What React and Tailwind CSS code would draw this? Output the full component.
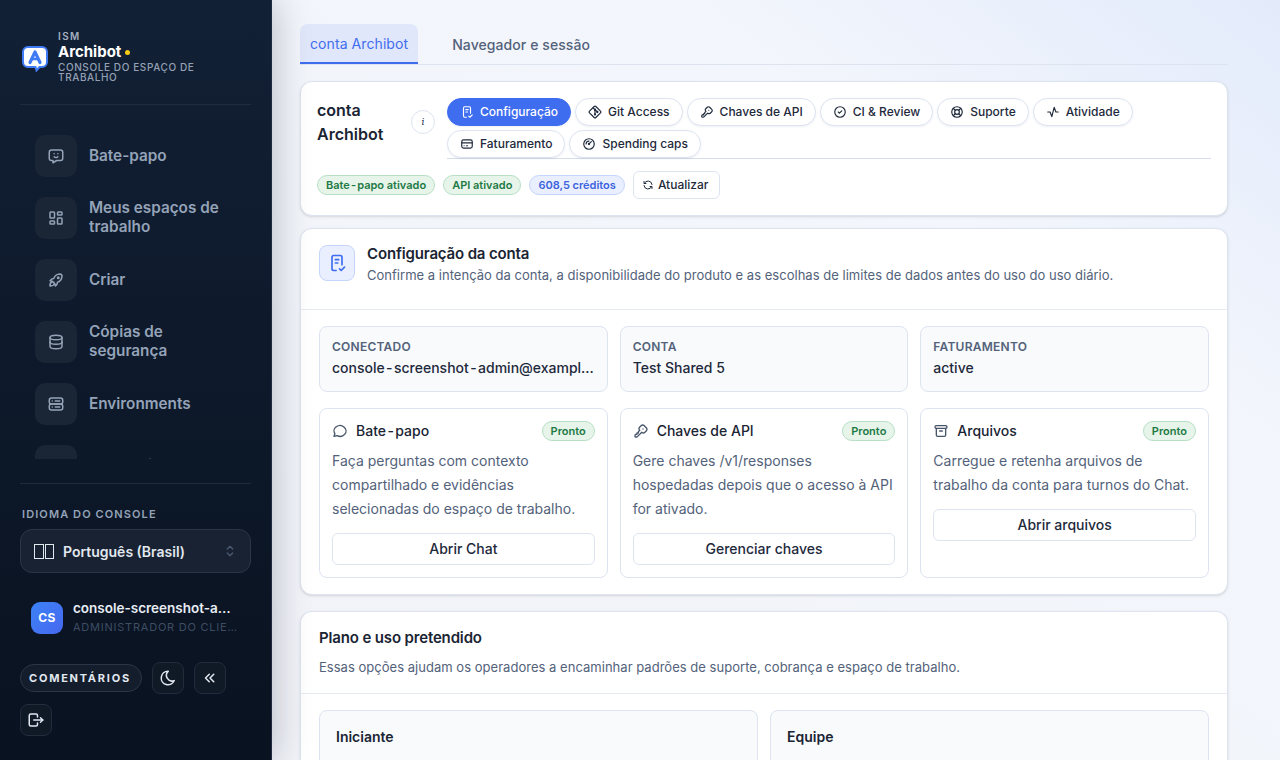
import React from 'react'
import {
  TbMessageChatbot, TbLayoutDashboard, TbRocket, TbDatabase, TbServer2, TbFolder, TbBrandGit, TbSelector, TbMoon,
  TbChevronsLeft, TbLogout, TbKey, TbCircleCheck, TbLifebuoy, TbActivity, TbCreditCard,
  TbGauge, TbRefresh, TbMessageCircle, TbArchive,
} from 'react-icons/tb'

const NAV_ITEMS = [
  { label: 'Bate-papo', icon: TbMessageChatbot },
  { label: 'Meus espaços de trabalho', icon: TbLayoutDashboard },
  { label: 'Criar', icon: TbRocket },
  { label: 'Cópias de segurança', icon: TbDatabase },
  { label: 'Environments', icon: TbServer2 },
  { label: 'Repositórios', icon: TbFolder },
]

const SECTION_TABS = [
  { label: 'Configuração', icon: SetupIcon, active: true },
  { label: 'Git Access', icon: TbBrandGit },
  { label: 'Chaves de API', icon: TbKey },
  { label: 'CI & Review', icon: TbCircleCheck },
  { label: 'Suporte', icon: TbLifebuoy },
  { label: 'Atividade', icon: TbActivity },
  { label: 'Faturamento', icon: TbCreditCard },
  { label: 'Spending caps', icon: TbGauge },
]

const STATS = [
  { label: 'CONECTADO', value: 'console-screenshot-admin@example.com' },
  { label: 'CONTA', value: 'Test Shared 5' },
  { label: 'FATURAMENTO', value: 'active' },
]

const PRODUCTS = [
  {
    title: 'Bate-papo',
    icon: TbMessageCircle,
    text: 'Faça perguntas com contexto compartilhado e evidências selecionadas do espaço de trabalho.',
    action: 'Abrir Chat',
  },
  {
    title: 'Chaves de API',
    icon: TbKey,
    text: 'Gere chaves /v1/responses hospedadas depois que o acesso à API for ativado.',
    action: 'Gerenciar chaves',
  },
  {
    title: 'Arquivos',
    icon: TbArchive,
    text: 'Carregue e retenha arquivos de trabalho da conta para turnos do Chat.',
    action: 'Abrir arquivos',
  },
]

// the hyphen sits wider in the content area than Inter's default
function spaced(text) {
  return text.split('-').map((part, i) => (
    <React.Fragment key={i}>
      {i > 0 && <span className="mx-[0.1em]">-</span>}
      {part}
    </React.Fragment>
  ))
}

function SetupIcon({ className }) {
  return (
    <svg viewBox="0 0 24 24" fill="none" stroke="currentColor" strokeWidth="2" strokeLinecap="round" strokeLinejoin="round" className={className}>
      <path d="M11 21H8a2 2 0 0 1-2-2V5a2 2 0 0 1 2-2h8a2 2 0 0 1 2 2v9" />
      <path d="M10 8h4M10 12h3" />
      <path d="m15 19 2 2 4-4" />
    </svg>
  )
}

function LogoMark() {
  return (
    <svg viewBox="0 0 26 26" className="mt-[6px] size-[26px] shrink-0">
      <path d="M6 1h14a5 5 0 0 1 5 5v10a5 5 0 0 1-5 5h-2.500l-3 3.500-1-3.500H6a5 5 0 0 1-5-5V6a5 5 0 0 1 5-5z" fill="#ffffff" stroke="#3f7bf5" strokeWidth="2" />
      <path d="M8 16.500 13 6l5 10.500" fill="none" stroke="#3f7bf5" strokeWidth="3.200" strokeLinecap="round" strokeLinejoin="round" />
      <path d="M10 13h6" stroke="#3f7bf5" strokeWidth="2.500" />
    </svg>
  )
}

function Sidebar() {
  return (
    <aside className="relative z-10 flex h-[760px] w-[272px] shrink-0 flex-col border-r border-[#1e2b40] bg-gradient-to-b from-[#122035] to-[#091220] shadow-[0_0_36px_rgba(15,23,42,0.28)]">
      <div className="mx-5 flex h-[105px] items-center gap-2.5 border-b border-[#1f2c40] pt-2 pl-0.5">
        <LogoMark />
        <div className="min-w-0">
          <div className="text-[10px] leading-[12px] font-semibold tracking-[0.14em] text-[#a3afc0]">ISM</div>
          <div className="mt-px flex items-center gap-1 text-[15px] leading-[18px] font-bold text-white">
            Archibot
            <span className="size-[5px] rounded-full bg-[#facc15]" />
          </div>
          <div className="mt-px text-[10px] leading-[10px] font-medium tracking-[0.06em] text-[#94a1b5]">CONSOLE DO ESPAÇO DE TRABALHO</div>
        </div>
      </div>

      <nav className="mt-[30px] h-[324px] overflow-hidden px-[35px]">
        <div className="flex flex-col gap-5">
          {NAV_ITEMS.map((item) => {
            const Icon = item.icon
            return (
              <div key={item.label} className="flex items-center gap-3">
                <span className="flex size-[42px] shrink-0 items-center justify-center rounded-[10px] bg-[#1a2636] text-[#94a3b8]">
                  <Icon className="size-[18px]" />
                </span>
                <span className="pb-0.5 text-[15.3px] leading-[19px] font-semibold text-[#94a3b8]">{item.label}</span>
              </div>
            )
          })}
        </div>
      </nav>

      <div className="mx-5 mt-6 border-t border-[#1f2c40] pt-[24px]">
        <div className="px-0.5 text-[11px] leading-[13px] font-semibold tracking-[0.1em] text-[#94a3b8]">IDIOMA DO CONSOLE</div>
        <div className="mt-[8px] flex h-[44px] items-center rounded-xl border border-[#2a3648] bg-[#182232] pr-3 pl-[13px]">
          <span className="flex gap-px">
            <span className="h-[15px] w-[10px] border border-[#e2e8f0]" />
            <span className="h-[15px] w-[9px] border border-[#e2e8f0]" />
          </span>
          <span className="ml-[9px] flex-1 text-[14px] font-semibold text-[#e2e8f0]">Português (Brasil)</span>
          <TbSelector className="size-4 text-[#4b5a70]" />
        </div>

        <div className="mt-[27px] flex items-center gap-2.5 pr-[10px] pl-[11px]">
          <span className="flex size-8 shrink-0 items-center justify-center rounded-[9px] bg-gradient-to-br from-[#3b82f6] to-[#4668f0] text-[12px] font-bold tracking-[0.04em] text-white">CS</span>
          <div className="min-w-0 flex-1 pb-0.5">
            <div className="truncate pr-1 text-[13.5px] leading-[17px] font-semibold text-[#e8edf4]">console-screenshot-admin</div>
            <div className="mt-[3px] truncate text-[11px] leading-[14px] tracking-[0.07em] text-[#3f4d63]">ADMINISTRADOR DO CLIENTE</div>
          </div>
        </div>

        <div className="mt-[26px] flex flex-wrap items-center gap-2.5">
          <span className="flex h-7 items-center rounded-full border border-[#2a3648] bg-[#141d2b] pr-[10px] pl-2 text-[11px] font-bold tracking-[0.16em] text-[#e2e8f0]">COMENTÁRIOS</span>
          <span className="flex size-8 items-center justify-center rounded-lg border border-[#212c3d] bg-[#101926] text-[#e2e8f0]"><TbMoon className="size-[18px]" /></span>
          <span className="flex size-8 items-center justify-center rounded-lg border border-[#212c3d] bg-[#101926] text-[#e2e8f0]"><TbChevronsLeft className="size-[18px]" /></span>
          <span className="flex size-8 items-center justify-center rounded-lg border border-[#212c3d] bg-[#101926] text-[#e2e8f0]"><TbLogout className="size-[18px]" /></span>
        </div>
      </div>
    </aside>
  )
}

function Pill({ tone, children }) {
  const tones = {
    green: 'border-[#b7e0c5] bg-[#e6f4ea] text-[#1f7a45]',
    blue: 'border-[#c5d5fb] bg-[#e9effe] text-[#3d63dd]',
  }
  return (
    <span className={`inline-flex h-5 items-center rounded-full border px-2 text-[11px] font-semibold ${tones[tone]}`}>
      {children}
    </span>
  )
}

function AccountHeader() {
  return (
    <section className="mt-4 rounded-xl border border-[#dde4f0] bg-white p-4 shadow-sm">
      <div className="flex items-start">
        <h1 className="w-[94px] shrink-0 text-[16px] leading-[24px] font-semibold text-[#1a2433]">conta Archibot</h1>
        <span className="mt-3 flex size-6 shrink-0 items-center justify-center rounded-full border border-[#dde4f0] font-serif text-[11px] text-[#334155] italic">i</span>
        <div className="ml-3 flex flex-1 flex-wrap gap-1 border-b border-[#d6deeb]">
          {SECTION_TABS.map((tab) => {
            const Icon = tab.icon
            return (
              <span
                key={tab.label}
                className={`flex h-7 items-center gap-1.5 rounded-full border px-3 text-[12px] font-medium shadow-[0_1px_2px_rgba(37,60,120,0.08)] ${tab.active ? 'border-[#3f6df0] bg-[#3f6df0] text-white' : 'border-[#dde4f0] bg-white text-[#1e293b]'}`}
              >
                <Icon className="size-3.5 shrink-0" />
                {tab.label}
              </span>
            )
          })}
        </div>
      </div>
      <div className="mt-3 flex items-center gap-2">
        <Pill tone="green">{spaced('Bate-papo ativado')}</Pill>
        <Pill tone="green">API ativado</Pill>
        <Pill tone="blue">608,5 créditos</Pill>
        <span className="flex h-7 items-center gap-1 rounded-md border border-[#dde4f0] bg-white pr-[11px] pl-2 text-[12px] font-medium text-[#1e293b]">
          <TbRefresh className="size-3" />
          Atualizar
        </span>
      </div>
    </section>
  )
}

function ProductCard({ item }) {
  const Icon = item.icon
  return (
    <div className="flex min-w-0 flex-col rounded-lg border border-[#dde4f0] bg-white px-3 pt-3 pb-3">
      <div className="flex h-5 items-center">
        <Icon className="size-4 shrink-0 text-[#475569]" />
        <span className="ml-2 flex-1 pb-0.5 text-[14px] font-medium text-[#1a2433]">{spaced(item.title)}</span>
        <Pill tone="green">Pronto</Pill>
      </div>
      <p className="mt-2 text-[14px] leading-[24px] text-[#53627a]">{item.text}</p>
      <button className="mt-3 h-8 rounded-md border border-[#dde4f0] bg-white pb-0.5 text-[14px] font-medium text-[#1e293b]">{item.action}</button>
    </div>
  )
}

function AccountSetup() {
  return (
    <section className="mt-[12px] rounded-xl border border-[#dde4f0] bg-white shadow-sm">
      <div className="flex h-[81px] gap-3 border-b border-[#e6ebf3] px-[18px] pt-4">
        <span className="flex size-9 shrink-0 items-center justify-center rounded-lg border border-[#c5d5fb] bg-[#e9effe] text-[#3f6df0]">
          <SetupIcon className="size-5" />
        </span>
        <div className="-mt-px">
          <h2 className="text-[15px] leading-[20px] font-semibold tracking-[-0.01em] text-[#1a2433]">Configuração da conta</h2>
          <p className="mt-px text-[13px] leading-[20px] tracking-[0.02px] text-[#53627a]">Confirme a intenção da conta, a disponibilidade do produto e as escolhas de limites de dados antes do uso do uso diário.</p>
        </div>
      </div>
      <div className="px-[18px] py-4">
        <div className="grid grid-cols-3 gap-3">
          {STATS.map((stat) => (
            <div key={stat.label} className="min-w-0 rounded-lg border border-[#dde4f0] bg-[#f8fafc] px-3 pt-3 pb-[13px]">
              <div className="text-[12px] leading-[15px] font-semibold tracking-[0.02em] text-[#53627a]">{stat.label}</div>
              <div className="mt-1 truncate text-[14px] leading-[20px] font-medium text-[#1e293b]">{spaced(stat.value)}</div>
            </div>
          ))}
        </div>
        <div className="mt-4 grid grid-cols-3 gap-3">
          {PRODUCTS.map((item) => <ProductCard key={item.title} item={item} />)}
        </div>
      </div>
    </section>
  )
}

function PlanSection() {
  return (
    <section className="mt-4 rounded-t-xl border border-b-0 border-[#dde4f0] bg-white shadow-sm">
      <div className="h-[82px] border-b border-[#e6ebf3] px-[18px] pt-4">
        <h2 className="text-[15px] leading-[20px] font-semibold tracking-[-0.01em] text-[#1a2433]">Plano e uso pretendido</h2>
        <p className="mt-[9px] text-[13px] leading-[20px] tracking-[0.025px] text-[#53627a]">Essas opções ajudam os operadores a encaminhar padrões de suporte, cobrança e espaço de trabalho.</p>
      </div>
      <div className="grid grid-cols-2 gap-3 px-[18px] pt-4">
        {['Iniciante', 'Equipe'].map((plan) => (
          <div key={plan} className="h-24 rounded-lg border border-[#dde4f0] bg-[#f8fafc] px-4 pt-4">
            <h3 className="text-[14px] leading-[20px] font-semibold text-[#1a2433]">{plan}</h3>
          </div>
        ))}
      </div>
    </section>
  )
}

export default function App() {
  return (
    <div className="flex h-[760px] overflow-hidden font-['Inter',sans-serif]">
      <Sidebar />
      <main className="h-[760px] flex-1 overflow-hidden bg-gradient-to-tr from-[#f1f3f8] via-[#f3f6fc] via-70% to-[#e3ebfb] pt-6 pl-7">
        <div className="w-[928px]">
          <div className="flex h-[41px] gap-[24px] border-b border-[#dde4f0] tracking-[0.005em]">
            <span className="flex h-[40px] items-center rounded-t-lg border-b-2 border-[#3f6df0] bg-[#e0e7fa] px-[10px] text-[14px] text-[#3f6df0]">conta Archibot</span>
            <span className="flex h-[40px] items-center px-[10px] text-[14px] font-medium text-[#53627a]">Navegador e sessão</span>
          </div>
          <AccountHeader />
          <AccountSetup />
          <PlanSection />
        </div>
      </main>
    </div>
  )
}
